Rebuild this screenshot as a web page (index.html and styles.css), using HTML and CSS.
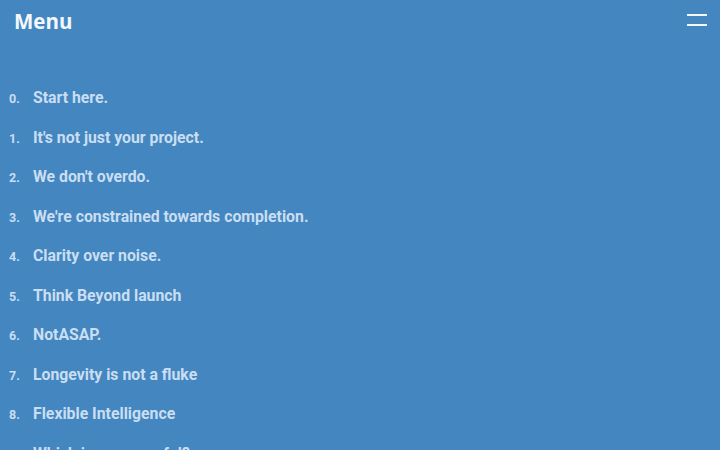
FILE: index.html
```html
<!DOCTYPE html>
<html>
<head>
<meta charset="utf-8">
<link rel="stylesheet" href="styles.css">
</head>
<body>
<header class="top">
  <h1 class="title">Menu</h1>
  <button class="burger" aria-label="Open menu">
    <svg width="24" height="14" viewBox="0 0 24 14"><rect x="1" y="0" width="20" height="2" fill="#f2f7fc"/><rect x="1" y="10" width="20" height="2" fill="#f2f7fc"/></svg>
  </button>
</header>
<ol class="list">
  <li class="item"><span class="num">0.</span><span class="text">Start here.</span></li>
  <li class="item"><span class="num">1.</span><span class="text">It's not just your project.</span></li>
  <li class="item"><span class="num">2.</span><span class="text">We don't overdo.</span></li>
  <li class="item"><span class="num">3.</span><span class="text">We're constrained towards completion.</span></li>
  <li class="item"><span class="num">4.</span><span class="text">Clarity over noise.</span></li>
  <li class="item"><span class="num">5.</span><span class="text">Think Beyond launch</span></li>
  <li class="item"><span class="num">6.</span><span class="text">NotASAP.</span></li>
  <li class="item"><span class="num">7.</span><span class="text">Longevity is not a fluke</span></li>
  <li class="item"><span class="num">8.</span><span class="text">Flexible Intelligence</span></li>
  <li class="item"><span class="num">9.</span><span class="text">Which is more useful?</span></li>
</ol>
</body>
</html>
```
FILE: styles.css
```css
html, body {
  margin: 0;
  padding: 0;
  height: 100%;
  overflow: hidden;
}
body {
  background: #4486c0;
  font-family: "Roboto", "Liberation Sans", sans-serif;
}
.top {
  display: flex;
  justify-content: space-between;
  align-items: flex-start;
  padding: 6px 10px 0 14px;
  height: 61px;
  box-sizing: border-box;
}
.title {
  margin: 0;
  font-family: "Open Sans", sans-serif;
  font-weight: 700;
  font-size: 20.5px;
  line-height: 30px;
  color: #f3f8fc;
}
.burger {
  background: none;
  border: 0;
  padding: 0;
  margin-top: 8px;
  margin-right: 0;
}
.burger svg { display: block; }
.list {
  list-style: none;
  margin: 0;
  padding: 27px 0 0 9px;
  display: flex;
  flex-direction: column;
}
.item {
  display: flex;
  align-items: baseline;
  height: 39.5px;
  color: #c9def2;
  font-weight: 700;
}
.num {
  width: 24px;
  font-size: 12.5px;
}
.text {
  font-size: 15.8px;
}
```
